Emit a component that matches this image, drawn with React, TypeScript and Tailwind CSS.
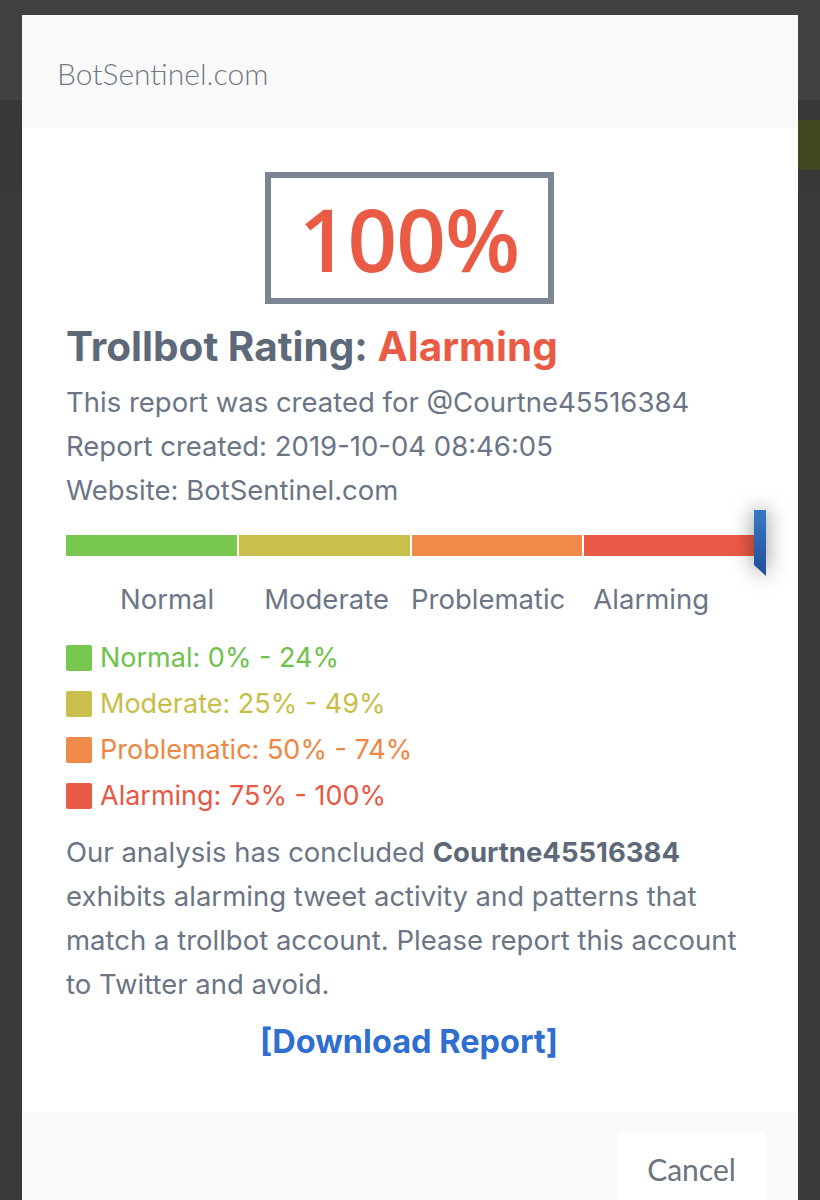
import React from "react";

const sf = { fontFamily: "Inter, 'Noto Sans', sans-serif" };

function Marker() {
  return (
    <svg width="12" height="66" viewBox="0 0 12 66" className="drop-shadow-[0_0_10px_rgba(0,0,0,0.5)]">
      <defs>
        <linearGradient id="mg" x1="0" y1="0" x2="0" y2="1">
          <stop offset="0" stopColor="#3a78c4" />
          <stop offset="1" stopColor="#1f4f97" />
        </linearGradient>
      </defs>
      <path d="M0 0 H12 V66 L0 55 Z" fill="url(#mg)" />
    </svg>
  );
}

export default function App() {
  const legend = [
    { c: "#78c850", t: "#6ec24a", label: "Normal: 0% - 24%" },
    { c: "#c9bf4c", t: "#c6be48", label: "Moderate: 25% - 49%" },
    { c: "#f08a48", t: "#ee8744", label: "Problematic: 50% - 74%" },
    { c: "#ea5b47", t: "#e85845", label: "Alarming: 75% - 100%" },
  ];
  return (
    <div className="relative w-[820px] h-[1200px] overflow-hidden bg-[#3a3a3b]">
      {/* background page bands */}
      <div className="flex flex-col">
        <div className="h-[100px] bg-[#414141]" />
        <div className="h-[90px] bg-[#383838] flex justify-end items-center">
          <div className="w-[22px] h-[50px] bg-[#44481f] overflow-hidden" />
        </div>
        <div className="h-[1010px] bg-[#3a3a3b]" />
      </div>

      {/* modal */}
      <div className="absolute left-[22px] top-[15px] w-[776px] h-[1200px] bg-white flex flex-col">
        <div className="h-[113px] shrink-0 bg-[#f9f9f9] flex items-center pl-[35px] pt-[4px]">
          <span className="text-[30px] font-light text-[#727a84]" style={{ fontFamily: "Lato, sans-serif" }}>
            BotSentinel.com
          </span>
        </div>

        <div className="h-[984px] shrink-0 pl-[44px] overflow-hidden" style={sf}>
          <div className="flex justify-center pt-[44px] pr-[46px]">
            <div className="w-[289px] h-[132px] border-[6px] border-[#7c8593] flex items-center justify-center">
              <span className="text-[87px] font-semibold text-[#e95b44] leading-none tracking-[-1px]" style={{ fontFamily: "'Open Sans', sans-serif" }}>
                100%
              </span>
            </div>
          </div>

          <div className="mt-[19px] text-[40.5px] font-bold leading-[48px] text-[#5d6979]">
            Trollbot Rating: <span className="text-[#e95b44]">Alarming</span>
          </div>
          <div className="mt-[9px] text-[27.5px] leading-[44px] text-[#6b7585]">
            <div>This report was created for @Courtne45516384</div>
            <div>Report created: 2019-10-04 08:46:05</div>
            <div>Website: BotSentinel.com</div>
          </div>

          <div className="relative mt-[-2px] w-[700px] h-[66px] pt-[25px]">
            <div className="flex w-[689px] h-[21px] gap-[2px]">
              <div className="flex-1 bg-[#78c850]" />
              <div className="flex-1 bg-[#c9bf4c]" />
              <div className="flex-1 bg-[#f08a48]" />
              <div className="flex-1 bg-[#ea5b47]" />
            </div>
            <div className="absolute left-[688px] top-0">
              <Marker />
            </div>
          </div>

          <div className="flex text-[27.5px] leading-[44px] text-[#6b7585] mt-[1px]">
            <span className="ml-[54px]">Normal</span>
            <span className="ml-[50px]">Moderate</span>
            <span className="ml-[22px]">Problematic</span>
            <span className="ml-[28px]">Alarming</span>
          </div>

          <div className="mt-[14px] flex flex-col">
            {legend.map((l) => (
              <div key={l.label} className="flex items-center h-[46px]">
                <div className="w-[26px] h-[26px] rounded-[2px]" style={{ background: l.c }} />
                <span className="ml-[8px] text-[27px]" style={{ color: l.t }}>
                  {l.label}
                </span>
              </div>
            ))}
          </div>

          <p className="mt-[11px] w-[690px] text-[27.5px] leading-[44px] text-[#6b7585]">
            Our analysis has concluded <b className="font-bold text-[#5d6979]">Courtne45516384</b> exhibits alarming tweet activity and patterns that match a trollbot account. Please report this account to Twitter and avoid.
          </p>

          <div className="mt-[12px] flex justify-center pr-[46px]">
            <span className="text-[32.5px] font-bold text-[#2f6fcf]">[Download Report]</span>
          </div>
        </div>

        <div className="flex-1 bg-[#f9f9f9] flex justify-end pr-[32px] pt-[20px]">
          <div className="w-[149px] h-[100px] bg-white rounded-[6px] flex justify-center pt-[15px]">
            <span className="text-[30px] text-[#6c7580]" style={{ fontFamily: "Lato, sans-serif" }}>
              Cancel
            </span>
          </div>
        </div>
      </div>
    </div>
  );
}
